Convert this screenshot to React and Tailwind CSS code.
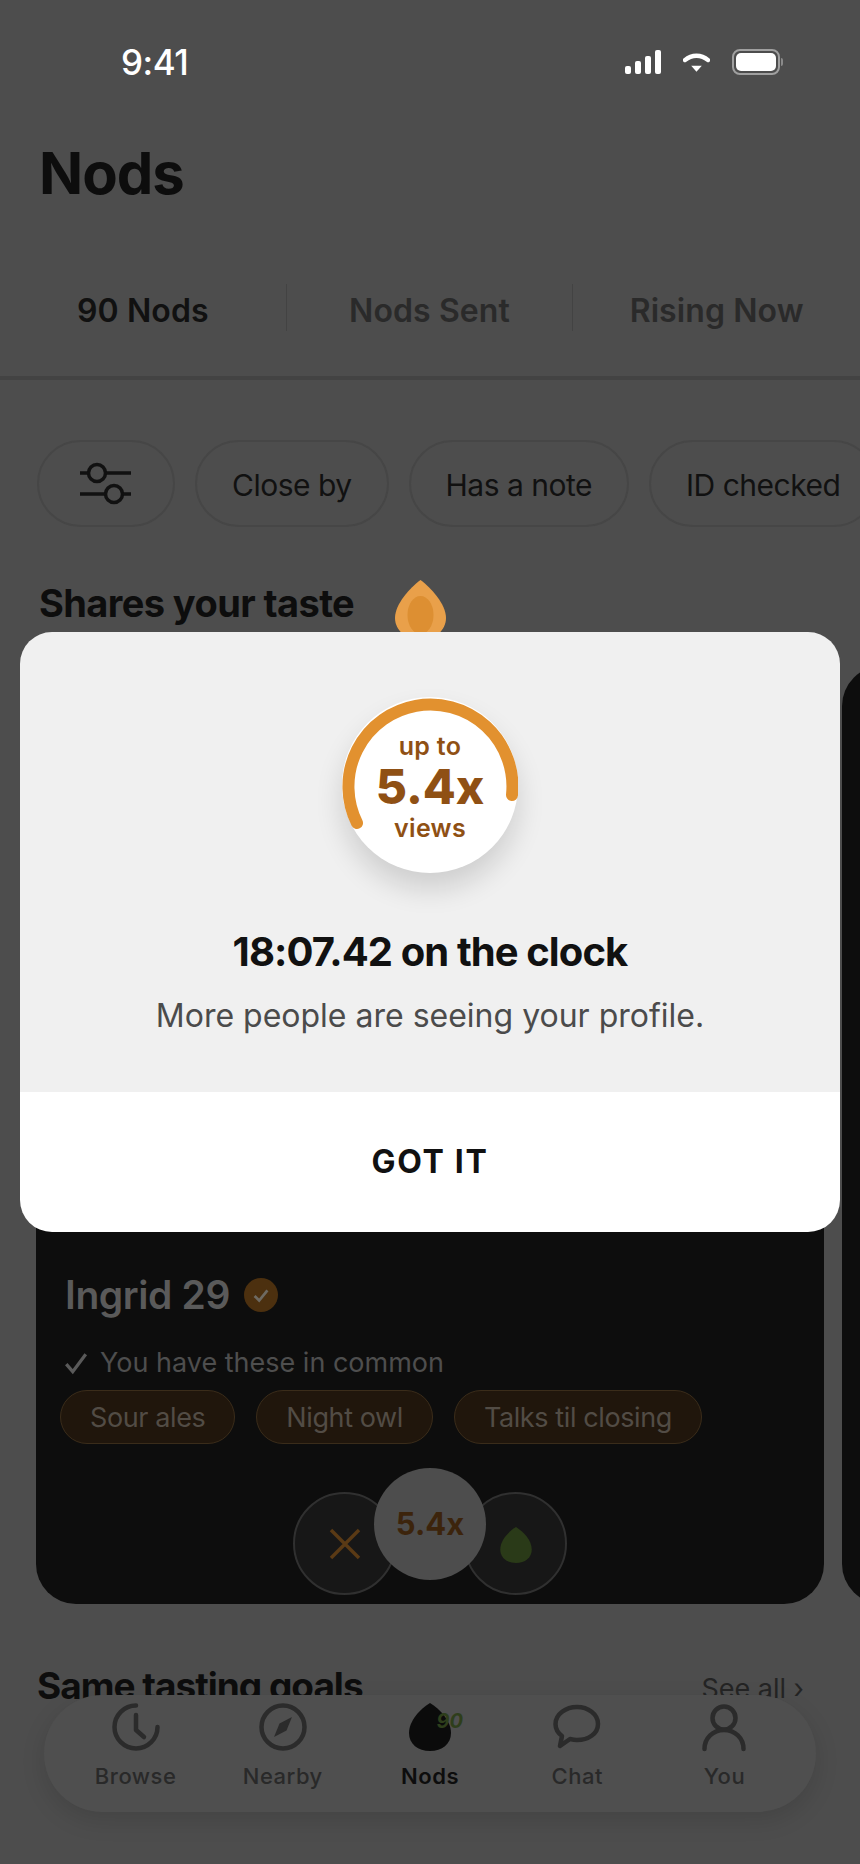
const tabs = ["90 Nods", "Nods Sent", "Rising Now"];
const filters = ["Close by", "Has a note", "ID checked"];
const tags = ["Sour ales", "Night owl", "Talks til closing"];

const Drop = ({ className, fill }) => (
  <svg viewBox="0 0 42 48" className={className} fill={fill}>
    <path d="M21 0C31 6 42 18 42 30C42 41 33 48 21 48C9 48 0 41 0 30C0 18 11 6 21 0Z" />
  </svg>
);

const navItems = [
  {
    label: "Browse",
    icon: (
      <svg viewBox="0 0 48 48" className="h-[50px] w-[48px]" fill="none" stroke="#2b2b2b" strokeWidth="4.500" strokeLinecap="round" strokeLinejoin="round">
        <path d="M24 2.500A21.500 21.500 0 1 0 45.500 24" />
        <path d="M24 12V27L32 34" />
      </svg>
    ),
  },
  {
    label: "Nearby",
    icon: (
      <svg viewBox="0 0 48 48" className="h-[50px] w-[48px]" fill="none" stroke="#2b2b2b" strokeWidth="4.500">
        <circle cx="24" cy="24" r="21.500" />
        <path d="M33 14L27.500 27.500L15 34L20.500 20.500Z" fill="#2b2b2b" stroke="none" />
      </svg>
    ),
  },
  {
    label: "Nods",
    active: true,
    icon: <Drop className="h-[50px] w-[42px]" fill="#0b0b0b" />,
  },
  {
    label: "Chat",
    icon: (
      <svg viewBox="0 0 48 48" className="h-[50px] w-[48px]" fill="none" stroke="#2b2b2b" strokeWidth="4.500" strokeLinejoin="round">
        <path d="M24 4C35 4 45 11 45 21C45 31 35 37 24 37C21 37 19 36.500 17 36L7 43L9 33C5 30 2.500 26 2.500 21C2.500 11 13 4 24 4Z" />
      </svg>
    ),
  },
  {
    label: "You",
    icon: (
      <svg viewBox="0 0 48 48" className="h-[50px] w-[48px]" fill="none" stroke="#2b2b2b" strokeWidth="4.500" strokeLinecap="round">
        <circle cx="24" cy="15" r="11.500" />
        <path d="M4.500 46C4.500 35 13 27 24 27C35 27 43.500 35 43.500 46" />
      </svg>
    ),
  },
];

const ProfileCard = () => (
  <div className="flex h-[938px] w-[788px] shrink-0 flex-col justify-end rounded-[40px] bg-[#0d0d0d] px-[24px] pb-[9px]">
    <div className="flex items-center gap-[14px] pl-[5px]">
      <span className="text-[39px] leading-[46px] font-semibold tracking-[-0.4px] text-[#5a5a5a]">Ingrid 29</span>
      <span className="flex h-[34px] w-[34px] items-center justify-center rounded-full bg-[#4c300f]">
        <svg viewBox="0 0 24 24" className="h-[22px] w-[22px]" fill="none" stroke="#6e6a62" strokeWidth="3">
          <path d="M5 13L10 18L19 7" />
        </svg>
      </span>
    </div>
    <div className="mt-[28px] flex items-center gap-[11px] pl-[3px] text-[27px] leading-[34px] text-[#4e4e4e]">
      <svg viewBox="0 0 24 24" className="h-[26px] w-[26px]" fill="none" stroke="#5a5a5a" strokeWidth="3">
        <path d="M3 13L9 20L21 4" />
      </svg>
      You have these in common
    </div>
    <div className="mt-[10px] flex gap-[21px]">
      {tags.map((t) => (
        <span key={t} className="flex h-[54px] items-center rounded-full border border-[#3a2c1a] bg-[#20160c] px-[29px] pt-[3px] text-[27px] tracking-[-0.4px] text-[#524c45]">
          {t}
        </span>
      ))}
    </div>
    <div className="mt-[24px] flex h-[127px] justify-center">
      <div className="relative h-[127px] w-[274px]">
        <span className="absolute bottom-0 left-0 flex h-[103px] w-[103px] items-center justify-center rounded-full border-2 border-[#303030] bg-[#171717]">
          <svg viewBox="0 0 32 32" className="h-[32px] w-[32px]" stroke="#5a3a15" strokeWidth="3.500">
            <path d="M2 2L30 30M30 2L2 30" />
          </svg>
        </span>
        <span className="absolute right-0 bottom-0 flex h-[103px] w-[103px] items-center justify-center rounded-full border-2 border-[#303030] bg-[#171717] pt-[3px]">
          <Drop className="h-[36px] w-[32px]" fill="#2a3a18" />
        </span>
        <span className="absolute top-0 left-[81px] flex h-[112px] w-[112px] items-center justify-center rounded-full bg-[#4d4d4d] text-[31px] font-bold text-[#3c240c]">
          5.4x
        </span>
      </div>
    </div>
  </div>
);

export default function App() {
  return (
    <div className="relative h-[1864px] w-full overflow-hidden bg-[#4d4d4d] font-['Inter',sans-serif]">
      {/* status bar */}
      <div className="flex h-[124px] items-center justify-between pr-[77px] pl-[121px]">
        <span className="text-[35px] font-medium tracking-[-0.5px] text-white">9:41</span>
        <div className="flex items-center gap-[22px]">
          <div className="flex h-[24px] items-end gap-[4px]">
            <span className="h-[8px] w-[6px] rounded-[2px] bg-white" />
            <span className="h-[13px] w-[6px] rounded-[2px] bg-white" />
            <span className="h-[18px] w-[6px] rounded-[2px] bg-white" />
            <span className="h-[24px] w-[6px] rounded-[2px] bg-white" />
          </div>
          <svg viewBox="0 0 28 20" className="h-[20px] w-[27px]" fill="none">
            <path d="M2 8C9 2 19 2 26 8" stroke="white" strokeWidth="4.500" strokeLinecap="round" />
            <path d="M8.500 14H19.500L14 20Z" fill="white" />
          </svg>
          <div className="flex items-center gap-[1px]">
            <div className="h-[26px] w-[48px] rounded-[8px] border-2 border-[#a0a0a0] p-[2px]">
              <div className="h-full w-full rounded-[5px] bg-white" />
            </div>
            <span className="h-[8px] w-[2px] rounded-r bg-[#8a8a8a]" />
          </div>
        </div>
      </div>

      <h1 className="h-[98px] pl-[39px] text-[58px] leading-[98px] font-bold tracking-[-1px] text-[#0d0d0d]">Nods</h1>

      {/* tabs */}
      <div className="mt-[62px] flex h-[96px] border-b-4 border-[#434343]">
        {tabs.map((t, i) => (
          <div
            key={t}
            className={`flex h-[47px] w-[288px] items-center justify-center pt-[7px] text-[32px] font-semibold tracking-[0.1px] ${
              i === 0 ? "text-[#111111]" : "text-[#2a2a2a]"
            } ${i < 2 ? "border-r border-[#434343]" : ""}`}
          >
            {t}
          </div>
        ))}
      </div>

      {/* filter chips */}
      <div className="mt-[60px] flex gap-[20px] pl-[37px] whitespace-nowrap">
        <div className="flex h-[87px] w-[138px] shrink-0 items-center justify-center rounded-[44px] border-2 border-[#464646]">
          <svg viewBox="0 0 52 44" className="h-[44px] w-[52px]" fill="none" stroke="#111111" strokeWidth="3.500">
            <circle cx="17" cy="11" r="8.500" />
            <circle cx="34" cy="32" r="8.500" />
            <path d="M25.500 11H51M0 11H8.500M0 32H25.500M42.500 32H51" />
          </svg>
        </div>
        {filters.map((f) => (
          <div key={f} className="flex h-[87px] shrink-0 items-center rounded-[44px] border-2 border-[#464646] px-[35px] pt-[4px] text-[30px] tracking-[-0.5px] text-[#111111]">
            {f}
          </div>
        ))}
      </div>

      <h2 className="mt-[53px] h-[46px] pl-[39px] text-[38px] leading-[46px] font-bold tracking-[-0.6px] text-[#0d0d0d]">Shares your taste</h2>

      {/* cards row, the next card only peeks in at the right edge */}
      <div className="mt-[40px] flex gap-[18px] pl-[36px]">
        <ProfileCard />
        <div className="h-[938px] w-[788px] shrink-0 rounded-[40px] bg-[#0d0d0d]" />
      </div>

      {/* next section, runs under the nav */}
      <div className="mt-[59px] flex items-end justify-between pr-[56px] pl-[37px]">
        <span className="text-[37px] leading-[46px] font-bold tracking-[-1px] text-[#0d0d0d]">Same tasting goals</span>
        <span className="text-[27px] text-[#242424]">See all ›</span>
      </div>

      {/* bottom nav */}
      <nav className="absolute bottom-[52px] left-[44px] flex h-[117px] w-[772px] items-start rounded-[58px] bg-[#4f4f4f] px-[18px] shadow-[0_8px_24px_rgba(0,0,0,0.12)]">
        {navItems.map((item) => (
          <div key={item.label} className="relative flex flex-1 flex-col items-center pt-[7px]">
            {item.icon}
            {item.active && (
              <span className="absolute top-[11px] left-[80px] text-[20px] font-bold text-[#2e3e1b] italic">90</span>
            )}
            <span className={`mt-[11px] text-[22px] leading-[26px] tracking-[0.5px] ${item.active ? "font-semibold text-[#0d0d0d]" : "font-medium text-[#292929]"}`}>
              {item.label}
            </span>
          </div>
        ))}
      </nav>

      {/* dialog */}
      <div className="absolute inset-0 flex items-center justify-center px-[20px]">
        <div className="relative w-full">
          <svg viewBox="0 0 51 60" className="absolute -top-[52px] left-[375px] h-[60px] w-[51px]">
            <path d="M25.500 0C36 8 51 24 51 38C51 50 40 60 25.500 60C11 60 0 50 0 38C0 24 15 8 25.500 0Z" fill="#e9a04a" />
            <ellipse cx="25.500" cy="35" rx="13" ry="19" fill="#dd8f32" />
          </svg>
          <div className="relative overflow-hidden rounded-[32px]">
            <div className="flex h-[460px] flex-col items-center bg-[#f0f0f0] pt-[65px]">
              <div className="relative flex h-[176px] w-[176px] flex-col items-center justify-center rounded-full bg-white pt-[3px] text-[#8f5014] shadow-[0_16px_28px_rgba(0,0,0,0.14)]">
                <svg viewBox="0 0 176 176" className="absolute inset-0 h-[176px] w-[176px]" fill="none">
                  <path d="M15 126A82 82 0 1 1 170 98" stroke="#e2912f" strokeWidth="12" strokeLinecap="round" />
                </svg>
                <span className="text-[25px] leading-[26px] font-semibold tracking-[0.3px]">up to</span>
                <span className="text-[48px] leading-[56px] font-extrabold">5.4x</span>
                <span className="text-[25px] leading-[26px] font-semibold tracking-[0.3px]">views</span>
              </div>
              <div className="mt-[54px] text-[40px] leading-[50px] font-bold tracking-[-0.9px] text-[#111111]">18:07.42 on the clock</div>
              <div className="mt-[16px] text-[32px] leading-[46px] text-[#4b4b4b]">More people are seeing your profile.</div>
            </div>
            <div className="flex h-[140px] items-center justify-center bg-white text-[32px] font-bold tracking-[1.7px] text-[#111111]">GOT IT</div>
          </div>
        </div>
      </div>
    </div>
  );
}
